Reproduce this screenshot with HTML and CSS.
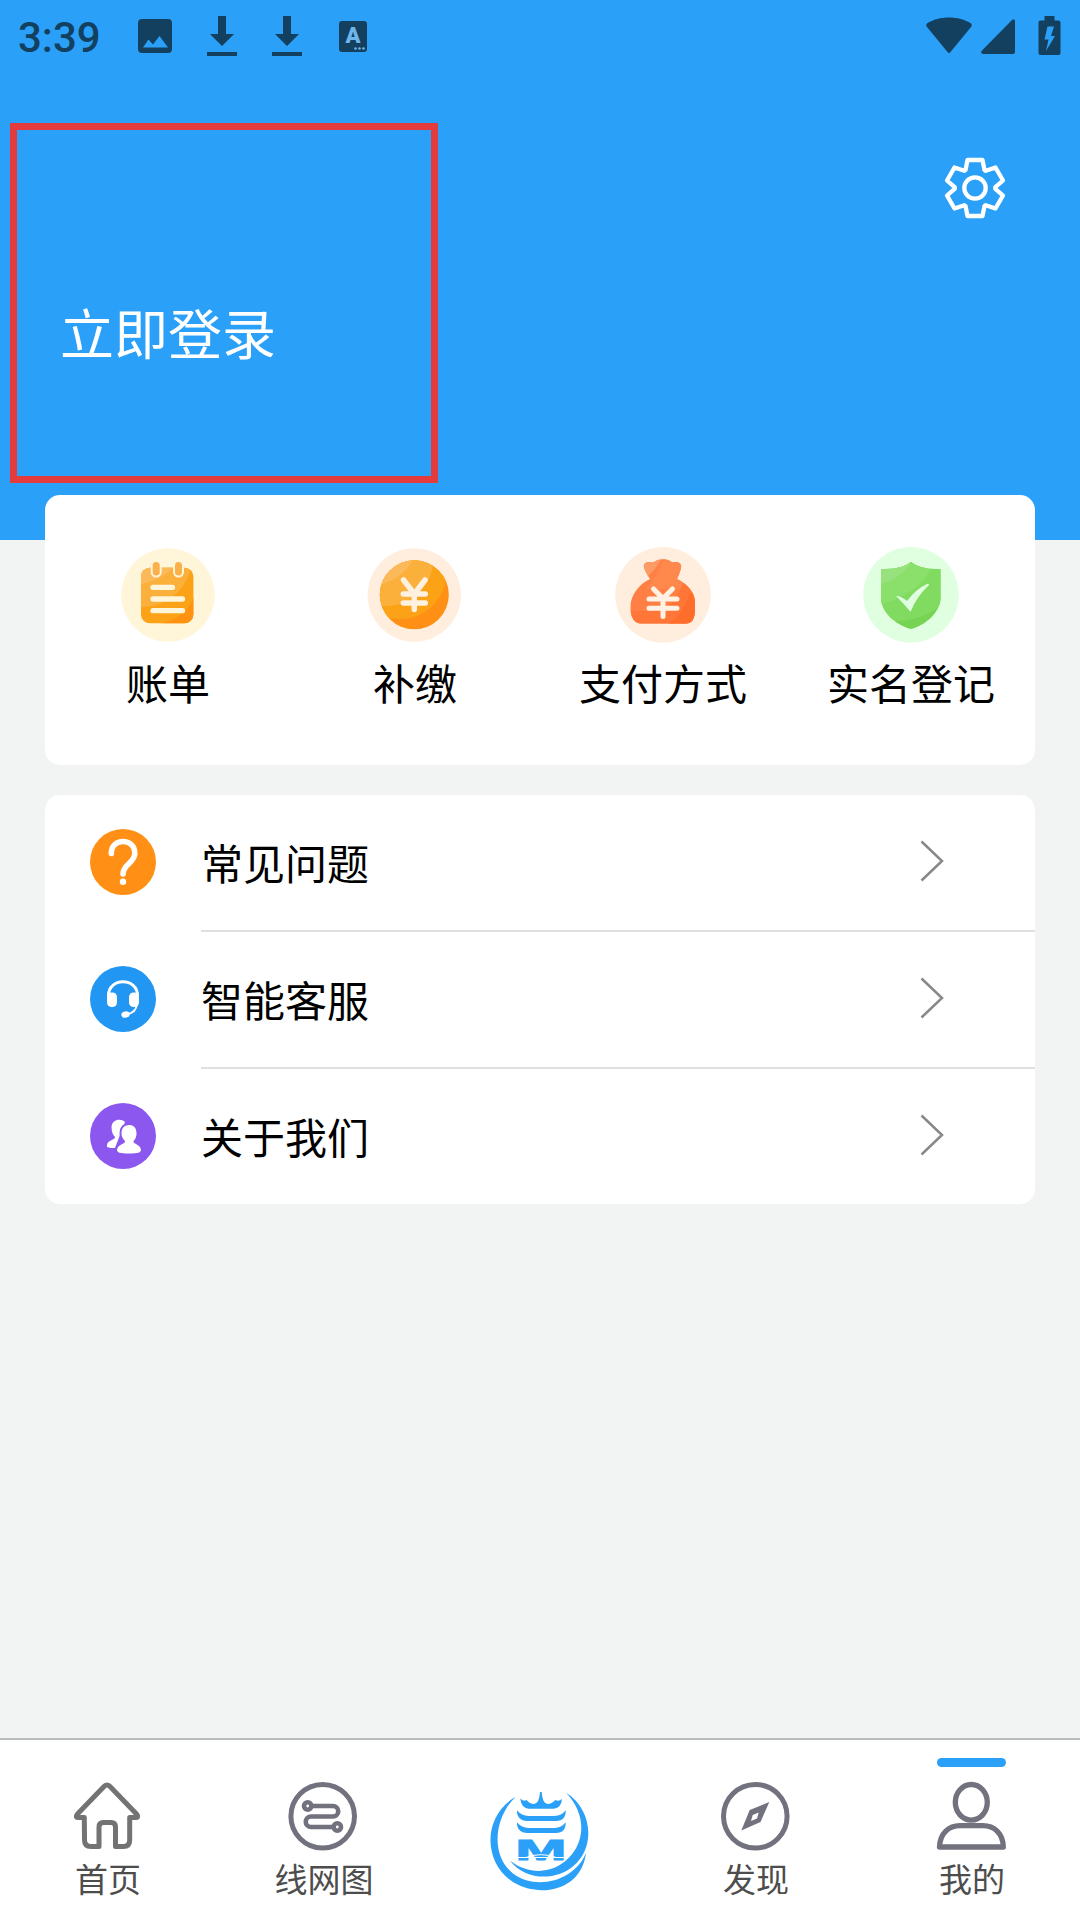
FILE: index.html
```html
<!DOCTYPE html>
<html lang="zh-CN">
<head>
  <meta charset="UTF-8">
  <meta name="viewport" content="width=device-width, initial-scale=1">
  <title>我的</title>
  <link rel="stylesheet" href="styles.css">
</head>
<body>
  <header class="header">
    <div class="status-bar">
      <span class="time">3:39</span>
      <div class="status-left">
        <svg width="34" height="34" viewBox="0 0 34 34"><path fill="#13405f" fill-rule="evenodd" d="M4 0h26a4 4 0 0 1 4 4v26a4 4 0 0 1-4 4H4a4 4 0 0 1-4-4V4a4 4 0 0 1 4-4zM5 28.500h25L21.500 17 15 25.500 10.500 20.500z"/></svg>
        <svg width="30" height="40" viewBox="0 0 30 40"><path fill="#13405f" d="M11 0h8v18h8L15 30 3 18h8zM0 36h30v4H0z"/></svg>
        <svg width="30" height="40" viewBox="0 0 30 40"><path fill="#13405f" d="M11 0h8v18h8L15 30 3 18h8zM0 36h30v4H0z"/></svg>
        <svg class="lang" width="28" height="31" viewBox="0 0 28 31"><rect width="28" height="31" rx="3" fill="#13405f"/><text class="icon-letter" x="14" y="22" text-anchor="middle">A</text><g fill="#6fb6ea"><circle cx="16.500" cy="27.500" r="1.300"/><circle cx="20.500" cy="27.500" r="1.300"/><circle cx="24.500" cy="27.500" r="1.300"/></g></svg>
      </div>
      <div class="status-right">
        <svg width="46" height="37" viewBox="0 0 46 37"><path fill="#13405f" d="M1 6.500C13-1.500 33-1.500 45 6.500q1.500 1.500 0 3.500L24.500 35q-1.500 2-3 0L1 10q-1.500-2 0-3.500z"/></svg>
        <svg class="signal" width="34" height="35" viewBox="0 0 34 35"><path fill="#13405f" d="M34 2v31q0 2-2 2H2q-3-1-1-3.500L31 1q2.500-2 3 1z"/></svg>
        <svg class="battery" width="23" height="39" viewBox="0 0 23 39"><path fill="#13405f" fill-rule="evenodd" d="M6.500 0h10v4.500h4q2 0 2 2V37q0 2-2 2h-18q-2 0-2-2V6.500q0-2 2-2h4zM9.500 10.500l-3 13h4L8 35l9-15h-4l3-9.500z"/></svg>
      </div>
    </div>
    <div class="profile">
      <a class="login">立即登录</a>
      <svg class="settings" width="64" height="64" viewBox="-32 -32 64 64" fill="none" stroke="#fff" stroke-width="4.300" stroke-linejoin="round">
        <path d="M-9.500-18L-7.500-28H7.500L9.500-18 10.800-17.200 20.500-20.500 28-7.500 20.300-.8V.8L28 7.500 20.500 20.500 10.800 17.200 9.500 18 7.500 28H-7.500L-9.500 18-10.800 17.200-20.500 20.500-28 7.500-20.300.8V-.8L-28-7.500-20.500-20.500-10.800-17.200z"/>
        <circle r="10.700"/>
      </svg>
    </div>
  </header>

  <main class="content">
    <section class="card shortcuts">
      <a class="shortcut">
        <svg width="96" height="96" viewBox="0 0 96 96">
          <defs>
            <clipPath id="billClip"><rect x="21" y="20.700" width="52.400" height="55.600" rx="9"/></clipPath>
          </defs>
          <circle cx="48" cy="48" r="46.700" fill="#fff5d9"/>
          <g clip-path="url(#billClip)">
            <rect x="21" y="20" width="53" height="57" fill="#fba216"/>
            <circle cx="22" cy="10" r="50" fill="#fbb03b"/>
            <path d="M21 20h32Q44 32 21 37z" fill="#fcb95a"/>
            <path d="M40 77q26-6 34-27v27z" fill="#ff9212"/>
          </g>
          <g fill="#fbb04a" stroke="#fff5d9" stroke-width="2"><rect x="31.700" y="14" width="9" height="15.500" rx="4.500"/><rect x="54" y="14" width="9" height="15.500" rx="4.500"/></g>
          <path d="M33 40.300h19.500M33 52h29.500M33 63.700h29.500" stroke="#fff5d9" stroke-width="5.300" stroke-linecap="round"/>
        </svg>
        <span>账单</span>
      </a>
      <a class="shortcut">
        <svg width="96" height="96" viewBox="0.700 0 96 96">
          <defs><clipPath id="coinClip"><circle cx="48" cy="47.800" r="34.500"/></clipPath></defs>
          <circle cx="48" cy="48" r="46.700" fill="#ffeedd"/>
          <g clip-path="url(#coinClip)">
            <rect width="96" height="96" fill="#ff9015"/>
            <circle cx="34" cy="26" r="46" fill="#fba216"/>
            <circle cx="20" cy="12" r="47" fill="#fbb03b"/>
            <path d="M0 0h52Q42 35 0 41z" fill="#fcb95a"/>
          </g>
          <path d="M37.300 33L48 47 58.700 33M48 47v15.500M37 47h22M37 56h22" fill="none" stroke="#fff1e0" stroke-width="5.500" stroke-linecap="round" stroke-linejoin="round"/>
        </svg>
        <span>补缴</span>
      </a>
      <a class="shortcut">
        <svg width="96" height="96" viewBox="0 0 96 96">
          <defs><clipPath id="bagClip"><path d="M35 32C31 26 28 20 29 17.500Q31 14 38 15.500 43 12 48 12.300 53 12 57.500 15.500 64 14 66 18 67 21 62 32C74 38 80 46 80 57V62Q80 76.500 71 76.500H25Q15.500 75 15.500 60C15.500 48 24 37 35 32z"/></clipPath></defs>
          <circle cx="48" cy="47.800" r="47.800" fill="#ffeedd"/>
          <g clip-path="url(#bagClip)">
            <rect width="96" height="96" fill="#ff7f45"/>
            <path d="M0 0h51Q45 19 33 29L0 35z" fill="#fb9b66"/>
            <path d="M51 0h45v42H30q16-14 21-42z" fill="#ff884c"/>
            <path d="M0 64h47q15-10 21-28h28v60H0z" fill="#ff7638"/>
            <path d="M52 77q17-8 22-31h22v50H52z" fill="#ff6d2b"/>
          </g>
          <path d="M38.500 42L48 51.500 57.500 42M48 52v17.500M34 52h28M34 61.300h28" fill="none" stroke="#fff1e4" stroke-width="5" stroke-linecap="round" stroke-linejoin="round"/>
        </svg>
        <span>支付方式</span>
      </a>
      <a class="shortcut">
        <svg width="96" height="96" viewBox="0 0 96 96">
          <defs><clipPath id="shieldClip"><path d="M48 15Q58 23 77.500 22V51C77.500 64 64 78 48 82 32 78 18 64 18 51V22Q38 23 48 15z"/></clipPath></defs>
          <circle cx="48" cy="47.800" r="47.800" fill="#e0ffe0"/>
          <g clip-path="url(#shieldClip)">
            <rect width="96" height="96" fill="#77d354"/>
            <path d="M0 0h96v37Q74 72 35 74L0 72z" fill="#81db60"/>
            <path d="M0 0h72Q72 42 18 57L0 60z" fill="#8be06c"/>
            <path d="M0 0h53Q48 28 18 37L0 40z" fill="#98e27d"/>
          </g>
          <path d="M33 49q5 0 11 5 9-12 20-17 2-1 2 1-12 11-18.500 26.700Q41 57 33 49z" fill="#e0ffe0"/>
        </svg>
        <span>实名登记</span>
      </a>
    </section>

    <section class="card menu">
      <a class="menu-item">
        <svg class="menu-icon" width="66" height="66" viewBox="0 0 66 66"><circle cx="33" cy="33" r="33" fill="#ff9015"/><path d="M21.300 24.500C21 8.500 45 8.500 44.800 24.500 44.800 34 33 35 33 45" fill="none" stroke="#fff" stroke-width="5.600" stroke-linecap="round"/><circle cx="33" cy="52.700" r="3.200" fill="#fff"/></svg>
        <div class="menu-body">
          <span>常见问题</span>
          <svg width="24" height="42" viewBox="0 0 24 42"><path d="M1.500 1.500L22 21 1.500 40.500" fill="none" stroke="#888" stroke-width="2.500"/></svg>
        </div>
      </a>
      <a class="menu-item">
        <svg class="menu-icon" width="66" height="66" viewBox="0 0 66 66"><circle cx="33" cy="33" r="33" fill="#2196f3"/><path d="M18.500 30C18 11 48 11 47.500 30" fill="none" stroke="#fff" stroke-width="3"/><rect x="17" y="26.500" width="10" height="14.500" rx="4.500" fill="#fff"/><rect x="39" y="26.500" width="10" height="14.500" rx="4.500" fill="#fff"/><path d="M47 38Q46 47 37 48" fill="none" stroke="#fff" stroke-width="2"/><ellipse cx="35.500" cy="48.500" rx="4.200" ry="3.200" transform="rotate(-15 35.500 48.500)" fill="#fff"/></svg>
        <div class="menu-body">
          <span>智能客服</span>
          <svg width="24" height="42" viewBox="0 0 24 42"><path d="M1.500 1.500L22 21 1.500 40.500" fill="none" stroke="#888" stroke-width="2.500"/></svg>
        </div>
      </a>
      <a class="menu-item">
        <svg class="menu-icon" width="66" height="66" viewBox="0 0 66 66"><circle cx="33" cy="33" r="33" fill="#8b57ee"/><path d="M35 19C31 15 22 16 21.500 24c0 5 1.500 8 3.500 10 .5 3-7.500 3-8 8-.5 3 1 3 8 3z" fill="#fff"/><path d="M39.500 22c-6 0-8 4-8 8.500 0 3 1.500 5.500 3.500 7.500 .5 3.500-7.500 3-8 9 0 2.500 3 3.500 12 3.500s12-1 12-3.500c-.5-6-8-5.500-7.500-9 2-2 3-4.500 3-7.500 0-4.500-2-8.500-7-8.500z" fill="#fff" stroke="#8b57ee" stroke-width="4" paint-order="stroke"/></svg>
        <div class="menu-body">
          <span>关于我们</span>
          <svg width="24" height="42" viewBox="0 0 24 42"><path d="M1.500 1.500L22 21 1.500 40.500" fill="none" stroke="#888" stroke-width="2.500"/></svg>
        </div>
      </a>
    </section>
  </main>

  <nav class="tabbar">
    <a class="tab">
      <svg width="72" height="72" viewBox="0 0 72 72" fill="none" stroke="#737373" stroke-width="5" stroke-linejoin="round"><path d="M12.300 37.500H6q-3 0-.5-3.500L31.500 7q3.500-4 7 0L64.500 34q2.500 3.500-.5 3.500H57.700V60q0 6.500-6.500 6.500H43.500V47q0-4.500-4.500-4.500H31.500q-4.500 0-4.500 4.500V66.500H19q-6.500 0-6.500-6.500z"/></svg>
      <span>首页</span>
    </a>
    <a class="tab">
      <svg width="72" height="72" viewBox="0 0 72 72" fill="none" stroke="#72727f"><circle cx="34.700" cy="36.300" r="31.800" stroke-width="5"/><g stroke-width="4.600"><circle cx="19.700" cy="26" r="3.700"/><circle cx="49.300" cy="47" r="3.700"/><path d="M23.500 26H45a5.200 5.200 0 0 1 0 10.500H23a5.200 5.200 0 0 0 0 10.500H45.500"/></g></svg>
      <span>线网图</span>
    </a>
    <a class="tab">
      <svg class="logo" width="100" height="100" viewBox="90 93 300 300" fill="#2aa0f8">
        <path d="M167 110C100 175 92 290 160 341 230 393 345 362 378 278 365 392 240 415 160 367 65 305 70 165 167 110z"/>
        <path d="M318 98C395 145 410 260 340 318 285 365 195 360 150 302 205 343 275 345 325 295 378 242 378 160 318 98z"/>
        <path d="M181 115Q189 126 199 120 210 132 222 132 238 130 240 96H245Q247 130 263 132 275 132 286 120 296 126 306 117 304 145 280 146H206Q183 144 181 115z"/>
        <path d="M171 151Q185 168 205 168H284Q304 168 317 151 318 183 288 183H202Q170 182 171 151z"/>
        <path d="M171 187Q185 204 205 204H284Q304 204 317 187 318 219 288 219H202Q170 218 171 187z"/>
        <text class="logo-letter" x="166" y="299" textLength="154" lengthAdjust="spacingAndGlyphs">M</text>
        <path d="M196 293Q243 275 290 293" fill="none" stroke="#fff" stroke-width="3"/>
        <path d="M172 291h142v3H172z" fill="#fff"/>
        <path d="M228 295h30v5h-30z"/>
      </svg>
    </a>
    <a class="tab">
      <svg width="72" height="72" viewBox="0 0 72 72"><circle cx="35.300" cy="36.300" r="31.800" fill="none" stroke="#72727f" stroke-width="5"/><path fill="#72727f" fill-rule="evenodd" d="M49.300 22L40.500 42 21.300 50.500 29.700 30zM38.700 32.500L32.700 35 31 41 37 38.500z"/></svg>
      <span>发现</span>
    </a>
    <a class="tab active">
      <svg width="72" height="72" viewBox="0 0 72 72" fill="none" stroke="#72727f" stroke-width="5.300" stroke-linejoin="round"><ellipse cx="35.300" cy="22.300" rx="16" ry="17.800"/><path d="M3.500 67C4 53 13 45.700 24 45.700H47C58 45.700 67 53 67.300 67z"/></svg>
      <span>我的</span>
    </a>
  </nav>
</body>
</html>
```

FILE: styles.css
```css
* { margin: 0; padding: 0; box-sizing: border-box; }
body {
  font-family: Roboto, "Noto Sans CJK SC", sans-serif;
  background: #f1f4f3;
  color: #000;
  height: 1920px;
  display: flex;
  flex-direction: column;
  overflow: hidden;
}
svg { display: block; flex: none; }

/* Header */
.header { height: 540px; background: #2aa0f8; }
.status-bar { height: 72px; padding: 0 19px 0 18px; display: flex; align-items: center; }
.time { width: 120px; font-size: 42px; font-weight: 500; color: #13405f; line-height: 72px; padding-top: 4px; }
.status-left { display: flex; align-items: center; gap: 35px; }
.lang { margin-left: 2px; }
.status-right { display: flex; align-items: center; margin-left: auto; margin-top: -2px; }
.signal { margin: 2px 23px 0 9px; }
.icon-letter { font: 900 22px Roboto, sans-serif; fill: #6fb6ea; }
.profile { display: flex; justify-content: space-between; padding: 51px 73px 0 10px; }
.login {
  width: 428px;
  height: 360px;
  border: 7px solid #e43c3c;
  padding-left: 43px;
  color: #fff;
  font-size: 54px;
  line-height: 414px;
}
.settings { margin-top: 33px; }

/* Cards */
.content { flex: 1; padding: 0 45px; margin-top: -45px; }
.card { background: #fff; border-radius: 15px; }
.shortcuts { height: 270px; display: grid; grid-template-columns: 246px 248px 248px 248px; padding-top: 52px; }
.shortcut { display: flex; flex-direction: column; align-items: center; font-size: 42px; line-height: 62px; white-space: nowrap; }
.shortcut span { margin-top: 12px; }
.menu { margin-top: 30px; }
.menu-item { display: flex; align-items: flex-start; padding-left: 45px; }
.menu-icon { margin: 34px 45px 0 0; }
.menu-body {
  flex: 1;
  height: 137px;
  display: flex;
  align-items: center;
  justify-content: space-between;
  padding: 0 91px 3px 0;
  border-bottom: 2px solid #dfdfdf;
  font-size: 42px;
}
.menu-item:last-child .menu-body { height: 135px; border-bottom: none; }

/* Bottom tabs */
.tabbar { height: 182px; background: #fff; border-top: 2px solid #bbbdbc; display: flex; }
.tab { flex: 1; position: relative; display: flex; flex-direction: column; align-items: center; padding-top: 40px; font-size: 33px; line-height: 48px; color: #4d4d4d; }
.tab span { margin-top: 5px; }
.tab.active::before { content: ""; position: absolute; top: 18px; left: 73px; width: 69px; height: 9px; border-radius: 5px; background: #2aa0f8; }
.logo { margin-top: 11px; }
.logo-letter { font: 700 88px "Liberation Sans", sans-serif; stroke: #2aa0f8; stroke-width: 3px; }
```
